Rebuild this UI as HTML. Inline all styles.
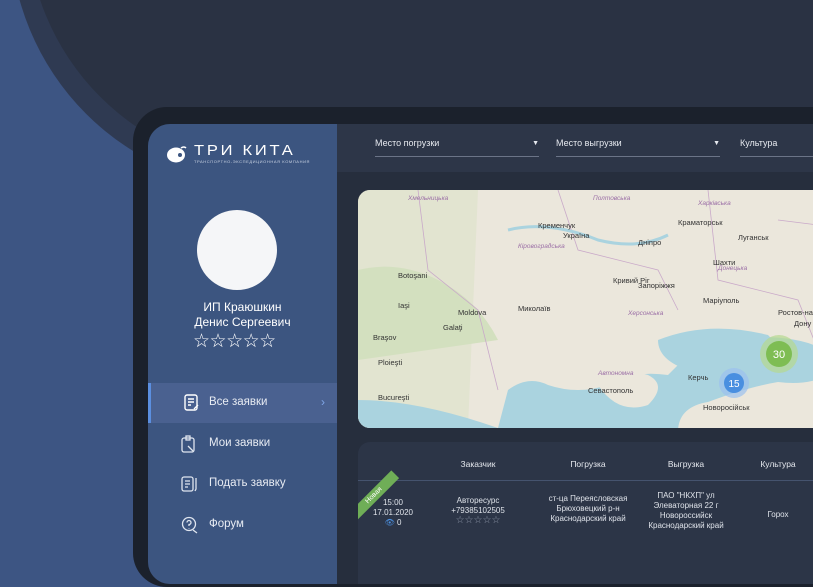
<!DOCTYPE html>
<html><head><meta charset="utf-8"><style>
*{margin:0;padding:0;box-sizing:border-box}
body{width:813px;height:542px;overflow:hidden;background:#3d5583;font-family:"Liberation Sans",sans-serif;position:relative}
.abs{position:absolute}
.mid{left:10px;top:-330px;width:1300px;height:520px;border-radius:260px;background:#2f3a52}
.dark{left:27px;top:-330px;width:1300px;height:500px;border-radius:250px;background:#2a3243}
.frame{left:133px;top:107px;width:720px;height:480px;border-radius:34px;background:#1b212c}
.screen{left:148px;top:124px;width:700px;height:460px;border-radius:22px;overflow:hidden;background:#262e3d}
.side{left:0;top:0;width:189px;height:460px;background:#3c5580}
.head{left:189px;top:0;width:520px;height:48px;background:#2d3648}
.sel{top:14px;font-size:9px;color:#e6e9ef;border-bottom:1px solid #6b7487;height:19px;width:164px}
.sel span{position:absolute;right:0;top:2px;font-size:7px}
.menu{left:0;width:189px;height:40px;color:#e8ecf3;font-size:11.5px}
.menu .t{position:absolute;left:61px;top:13px}
.menu svg{position:absolute;left:33px;top:11px}
.th{top:335px;font-size:8.5px;color:#e6e9ef;text-align:center}
.td{font-size:8px;color:#dfe3ea;text-align:center;line-height:10px}
</style></head><body>
<div class="abs mid"></div>
<div class="abs dark"></div>
<div class="abs frame"></div>
<div class="abs screen">
 <div class="abs side">
  <svg class="abs" style="left:19px;top:22px" width="20" height="17" viewBox="0 0 20 17"><ellipse cx="9" cy="9" rx="9" ry="7.5" fill="#fff"/><circle cx="13" cy="9" r="2" fill="#3c5580"/><path d="M14 2 q3 -2 5 0" stroke="#fff" fill="none" stroke-width="1.5"/></svg>
  <div class="abs" style="left:46px;top:18px;color:#fff;font-size:15px;letter-spacing:2.5px;transform:scaleX(1.1);transform-origin:left">ТРИ КИТА</div>
  <div class="abs" style="left:46px;top:35px;color:#c9d2e2;font-size:4px;letter-spacing:0.6px">ТРАНСПОРТНО-ЭКСПЕДИЦИОННАЯ КОМПАНИЯ</div>
  <div class="abs" style="left:49px;top:86px;width:80px;height:80px;border-radius:50%;background:#f5f6f8"></div>
  <div class="abs" style="left:0;top:176px;width:189px;text-align:center;color:#fff;font-size:12px;line-height:15px">ИП Краюшкин<br>Денис Сергеевич</div>
  <div class="abs" style="left:45px;top:206px;color:#fff;font-size:19px;letter-spacing:-0.5px">☆☆☆☆☆</div>
  <div class="abs menu" style="top:259px;background:#4a6190;border-left:3px solid #5b8fe0"><svg width="16" height="18" viewBox="0 0 16 18" fill="none" stroke="#fff" stroke-width="1.4"><rect x="1" y="1" width="12" height="15" rx="2"/><path d="M4 5h6M4 8h6M4 11h3M10 15l4-4"/></svg><span class="t" style="left:58px">Все заявки</span><span class="abs" style="left:170px;top:12px;color:#7fa6e8;font-size:12px">›</span></div>
  <div class="abs menu" style="top:300px"><svg width="16" height="18" viewBox="0 0 16 18" fill="none" stroke="#dfe5ef" stroke-width="1.3"><rect x="1" y="3" width="12" height="14" rx="2"/><rect x="5" y="1" width="4" height="4"/><path d="M7 11l5 5"/></svg><span class="t">Мои заявки</span></div>
  <div class="abs menu" style="top:340px"><svg width="18" height="18" viewBox="0 0 18 18" fill="none" stroke="#dfe5ef" stroke-width="1.3"><rect x="1" y="2" width="11" height="14" rx="2"/><path d="M4 6h5M4 9h5M4 12h3M15 3v11l-1 2"/></svg><span class="t">Подать заявку</span></div>
  <div class="abs menu" style="top:381px"><svg width="18" height="18" viewBox="0 0 18 18" fill="none" stroke="#dfe5ef" stroke-width="1.3"><circle cx="8" cy="8" r="6.5"/><path d="M6 6.5a2 2 0 1 1 2 2v1.5M8 12v.5M12 14l4 3"/></svg><span class="t">Форум</span></div>
 </div>
 <div class="abs head">
  <div class="abs sel" style="left:38px">Место погрузки<span>▼</span></div>
  <div class="abs sel" style="left:219px">Место выгрузки<span>▼</span></div>
  <div class="abs sel" style="left:403px;width:120px">Культура</div>
 </div>
 <div class="abs" style="left:210px;top:66px;width:520px;height:238px;border-radius:12px;overflow:hidden;background:#ebe7dc">
  <svg width="520" height="238" viewBox="0 0 520 238">
   <path d="M0 0 L120 0 L110 238 L0 238Z" fill="#e2e4d0"/>
   <path d="M0 80 q40 -10 80 10 t60 60 L0 170Z" fill="#d3e0bf"/>
   <path d="M140 238 L150 200 q20 -15 40 -5 q30 10 60 0 q25 -15 60 -10 l30 -30 q30 -5 60 -8 q40 0 60 10 l20 20 q-20 20 -60 15 q-30 5 -70 20 q-30 5 -30 30Z" fill="#aad3df"/>
   <path d="M300 150 q50 -20 110 -5 q20 20 -10 40 q-40 10 -70 -5 q-30 -10 -30 -30Z" fill="#aad3df"/>
   <path d="M0 238 L0 210 q60 0 140 28Z" fill="#aad3df"/>
   <path d="M240 195 q20 -20 50 -10 q20 10 0 30 q-30 10 -50 -20Z" fill="#ebe7dc"/>
   <path d="M60 0 L70 80 L120 120 L140 200 M200 0 L220 60 L300 80 L320 120 M350 0 L360 90 L440 110 L460 160 M420 30 L500 40" stroke="#c9a9c9" stroke-width="0.8" fill="none"/>
   <path d="M150 40 q40 -10 90 10 q40 10 70 -5" stroke="#aad3df" stroke-width="3" fill="none"/>
   <g font-family="Liberation Sans" font-size="7.5" fill="#333">
    <text x="205" y="48">Україна</text><text x="280" y="55">Дніпро</text><text x="255" y="93">Кривий Ріг</text><text x="280" y="98">Запоріжжя</text><text x="345" y="113">Маріуполь</text><text x="420" y="125">Ростов-на-</text><text x="436" y="136">Дону</text><text x="160" y="121">Миколаїв</text><text x="230" y="203">Севастополь</text><text x="20" y="210">Bucureşti</text><text x="20" y="175">Ploieşti</text><text x="15" y="150">Braşov</text><text x="85" y="140">Galaţi</text><text x="380" y="50">Луганськ</text><text x="355" y="75">Шахти</text><text x="330" y="190">Керчь</text><text x="345" y="220">Новоросійськ</text><text x="40" y="118">Iaşi</text><text x="40" y="88">Botoşani</text><text x="100" y="125">Moldova</text><text x="180" y="38">Кременчук</text><text x="320" y="35">Краматорськ</text>
   </g>
   <g font-family="Liberation Sans" font-size="6.5" fill="#9b6fa6" font-style="italic"><text x="235" y="10">Полтовська</text><text x="340" y="15">Харківська</text><text x="270" y="125">Херсонська</text><text x="160" y="58">Кіровоградська</text><text x="240" y="185">Автономна</text><text x="360" y="80">Донецька</text><text x="50" y="10">Хмельницька</text></g>
   <circle cx="421" cy="164" r="19" fill="#b5d98f" opacity="0.7"/><circle cx="421" cy="164" r="13" fill="#7ebd53"/><text x="421" y="168" font-size="11" fill="#fff" text-anchor="middle" font-family="Liberation Sans">30</text>
   <circle cx="376" cy="193" r="15" fill="#9bc0ee" opacity="0.7"/><circle cx="376" cy="193" r="10" fill="#4a8fe0"/><text x="376" y="197" font-size="10" fill="#fff" text-anchor="middle" font-family="Liberation Sans">15</text>
  </svg>
 </div>
 <div class="abs" style="left:210px;top:318px;width:520px;height:160px;border-radius:12px;background:#2c3547;overflow:hidden">
  <div class="abs" style="left:0;top:38px;width:520px;height:1px;background:#45536e"></div>
  <div class="abs" style="left:-14px;top:48px;width:60px;height:11px;background:#6fae57;transform:rotate(-45deg);color:#fff;font-size:7px;text-align:center;line-height:11px">Новая</div>
 </div>
 <div class="abs th" style="left:290px;width:80px">Заказчик</div>
 <div class="abs th" style="left:400px;width:80px">Погрузка</div>
 <div class="abs th" style="left:498px;width:80px">Выгрузка</div>
 <div class="abs th" style="left:590px;width:80px">Культура</div>
 <div class="abs td" style="left:215px;top:374px;width:60px">15:00<br>17.01.2020<br><span style="color:#4a8fe0">👁</span> 0</div>
 <div class="abs td" style="left:290px;top:372px;width:80px">Авторесурс<br>+79385102505<br><span style="color:#8a93a5;font-size:10px">☆☆☆☆☆</span></div>
 <div class="abs td" style="left:385px;top:370px;width:110px">ст-ца Переясловская<br>Брюховецкий р-н<br>Краснодарский край</div>
 <div class="abs td" style="left:483px;top:367px;width:110px">ПАО "НКХП" ул<br>Элеваторная 22 г<br>Новороссийск<br>Краснодарский край</div>
 <div class="abs td" style="left:590px;top:386px;width:80px">Горох</div>
</div>
</body></html>
